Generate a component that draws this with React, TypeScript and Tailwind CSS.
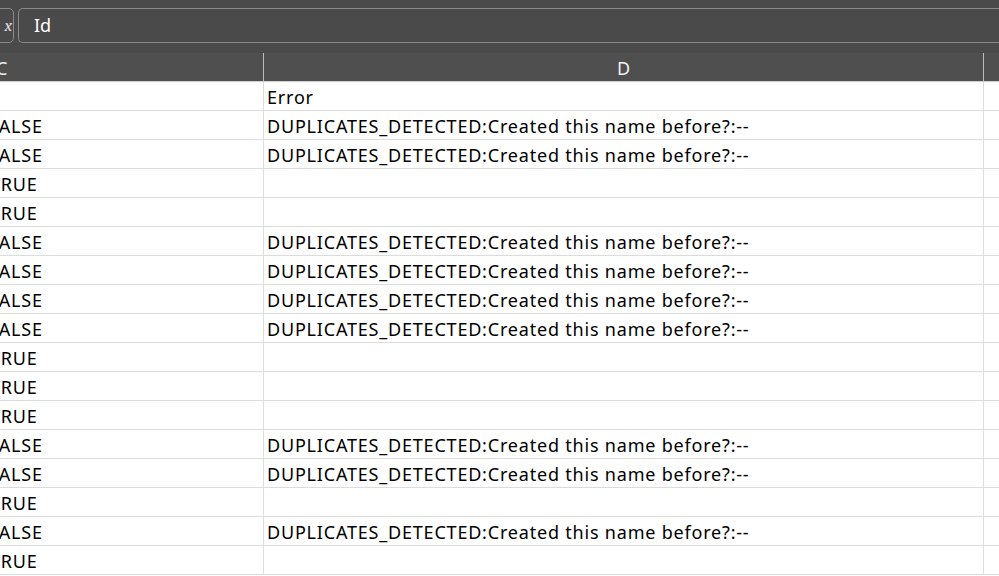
import React from "react";

const rows: (boolean | null)[] = [null, false, false, true, true, false, false, false, false, true, true, true, false, false, true, false, true];

export default function App() {
  return (
    <div className="w-[999px] h-[576px] overflow-hidden bg-white" style={{ fontFamily: '"Noto Sans", "Open Sans", sans-serif' }}>
      <div className="h-[53px] bg-[#4a4a4a] flex items-start pt-[8px] gap-[4px]">
        <div className="w-[15px] h-[35px] -ml-[1px] border border-[#8a8a8a] rounded-r-[5px] flex items-center justify-end pr-[1px] text-[#dcdcdc] text-[17px] overflow-hidden"><span className="italic font-serif">x</span></div>
        <div className="flex-1 h-[35px] border border-[#8a8a8a] border-r-0 rounded-l-[5px] flex items-center pl-[15px] text-white text-[18px]">Id</div>
      </div>
      <div className="h-[29px] bg-[#4f4f4f] flex text-[#f0f0f0] text-[18px] border-b border-[#d0d0d0]">
        <div className="w-[264px] shrink-0 border-r border-[#bdbdbd] flex items-end overflow-hidden"><span className="leading-[26px] -ml-[4px]">C</span></div>
        <div className="w-[720px] shrink-0 border-r border-[#bdbdbd] flex justify-center items-end"><span className="leading-[26px]">D</span></div>
        <div className="flex-1" />
      </div>
      {rows.map((r, i) => (
        <div key={i} className="h-[29px] flex text-[18px] tracking-[0.8px] text-black border-b border-[#dcdcdc]">
          <div className="w-[264px] shrink-0 border-r border-[#dcdcdc] overflow-hidden flex items-center pt-[2px]">
            <span className={r ? "-ml-[10px]" : "-ml-[11px]"}>{r === null ? "" : r ? "TRUE" : "FALSE"}</span>
          </div>
          <div className="w-[720px] shrink-0 border-r border-[#dcdcdc] flex items-center pl-[3px] pt-[2px]">
            {r === null ? "Error" : r ? "" : "DUPLICATES_DETECTED:Created this name before?:--"}
          </div>
          <div className="flex-1" />
        </div>
      ))}
    </div>
  );
}
